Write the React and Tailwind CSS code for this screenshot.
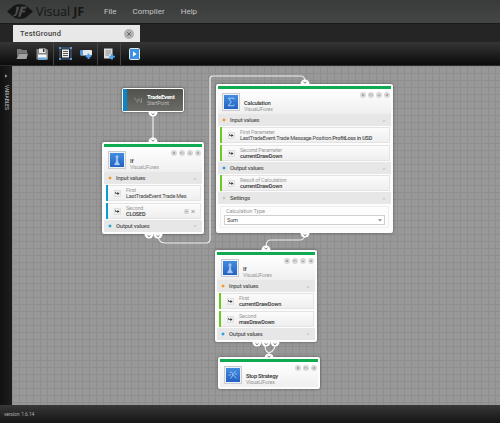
import React, { useState } from 'react';
import { X } from 'lucide-react';

const Logo = () => (
  <svg width="26" height="16" viewBox="0 0 26 16" className="shrink-0">
    <path d="M0 7.5 L7 1.5 Q13 -1 19 1.5 L26 7.5 L19 13.5 Q13 16 7 13.5 Z" fill="#161616" />
    <path d="M14 2.5 H20 L19 4.8 H16.3 L15.7 6.5 H18.5 L17.7 8.6 H15 L13.6 12.8 H11 Z" fill="#4b4c4c" />
    <path d="M9.5 2.8 H12.5 L10.2 10 Q9.4 12.8 6 12.4 L6.6 10.6 Q8 10.8 8.4 9.4 Z" fill="#4b4c4c" />
  </svg>
);

const OpenIcon = () => (
  <svg width="12" height="12" viewBox="0 0 12 12">
    <path d="M1 1 H5 L6 2 H11 V5 H3 L1 9 Z" fill="#777" />
    <path d="M3 5.5 H12 L10.5 11 H0.5 Z" fill="#a3a3a3" />
  </svg>
);

const SaveIcon = () => (
  <svg width="12" height="12" viewBox="0 0 12 12">
    <path d="M0.5 1 H11 L12 2 V11.5 H0.5 Z" fill="#858585" />
    <path d="M3 0.5 H9.5 V5 H3 Z" fill="#e8e8e8" />
    <path d="M7 1 H8.5 V4 H7 Z" fill="#333" />
    <path d="M2 6.5 H10.5 V11.5 H2 Z" fill="#f5f5f5" />
    <path d="M2 9.5 H10.5 V11.5 H2 Z" fill="#62a9ec" />
  </svg>
);

const SelectIcon = () => (
  <svg width="13" height="13" viewBox="0 0 13 13">
    <rect x="1" y="1" width="11" height="11" fill="none" stroke="#4e83b8" strokeWidth="0.8" />
    <rect x="3" y="2.5" width="7" height="8" fill="#eee" />
    <path d="M4 4.5 H9 M4 6.5 H9 M4 8.5 H9" stroke="#444" strokeWidth="0.9" />
    <path d="M0 0 H2 V2 H0 Z M11 0 H13 V2 H11 Z M0 11 H2 V13 H0 Z M11 11 H13 V13 H11 Z" fill="#5b9ad8" />
  </svg>
);

const AddNodeIcon = () => (
  <svg width="13" height="12" viewBox="0 0 13 12">
    <rect x="0.5" y="2" width="11.5" height="5.5" rx="1" fill="#e9e9e9" />
    <rect x="0.5" y="2" width="2.5" height="5.5" fill="#4d9ce8" />
    <path d="M8.5 5.5 V11 M5.8 8.2 H11.2" stroke="#4fa3f2" strokeWidth="2" />
  </svg>
);

const AddPageIcon = () => (
  <svg width="12" height="12" viewBox="0 0 12 12">
    <rect x="1" y="0.5" width="8.5" height="10" fill="#dcdcdc" />
    <path d="M2.5 3 H8 M2.5 5 H8 M2.5 7 H6" stroke="#777" strokeWidth="0.8" />
    <path d="M9 6 V11.5 M6.2 8.8 H11.8" stroke="#4fa3f2" strokeWidth="2" />
  </svg>
);

const PlayIcon = () => (
  <svg width="11" height="12" viewBox="0 0 11 12">
    <rect x="0.5" y="0.5" width="10" height="11" rx="1" fill="#3f92e0" stroke="#dcebf8" />
    <path d="M4 3.2 L7.5 6 L4 8.8 Z" fill="#fff" />
  </svg>
);

const glyphs = {
  if: <path d="M7 2 L8.5 4 L7.6 5 L8 9 L9.5 11 V12 H4.5 V11 L6 9 L6.4 5 L5.5 4 Z M5.5 5 H8.5" fill="#a8ccf4" stroke="#a8ccf4" strokeWidth="0.3" />,
  sum: <path d="M10 4.5 V3.2 H4.2 L7.3 7 L4.2 10.8 H10 V9.5" fill="none" stroke="#a8ccf4" strokeWidth="1" />,
  stop: <path d="M3.5 4 L6 4.5 L7 7 L4.5 10.5 M9.5 3 L7 6.5 L10.5 10.5 M9 6 H11 M2.5 7.5 L5 6.5" fill="none" stroke="#9cc6f5" strokeWidth="0.9" />,
};

const NodeIcon = ({ type }) => (
  <div className="w-[18px] h-[18px] p-px bg-[#eef1f5] border border-[#c9ccd0] shrink-0">
    <svg width="14" height="14" viewBox="0 0 14 14" className="bg-linear-to-b from-[#438ce0] to-[#2462c2]">
      {glyphs[type]}
    </svg>
  </div>
);

const marks = {
  stop: <path d="M2.2 2.2 H3.8 V3.8 H2.2 Z" fill="#888" />,
  link: <path d="M1.6 3.6 V2.6 H3.3 L4.5 3.8" fill="none" stroke="#999" strokeWidth="0.6" />,
  up: <path d="M1.7 3.7 L3 2.2 L4.3 3.7 Z" fill="#999" />,
  close: <path d="M2 2 L4 4 M4 2 L2 4" stroke="#999" strokeWidth="0.7" />,
};

const NodeTools = ({ items }) => (
  <div className="flex gap-[2px] pt-[2.5px] pr-[1.5px]">
    {items.map((item) => (
      <svg key={item} width="6" height="6" viewBox="0 0 6 6">
        <circle cx="3" cy="3" r="3" fill="#d8d8d8" />
        {marks[item]}
      </svg>
    ))}
  </div>
);

const ALL_TOOLS = ['stop', 'link', 'up', 'close'];

const NodeHeader = ({ type, title, tools = ALL_TOOLS }) => (
  <div className="flex h-[25px] pl-[4px] bg-linear-to-b from-white to-[#efefef]">
    <div className="pt-[4px]"><NodeIcon type={type} /></div>
    <div className="pt-[11px] pl-[4px] w-0 grow whitespace-nowrap">
      <div className="text-[5.8px] leading-[6px] tracking-[-0.25px] font-medium text-[#333]">{title}</div>
      <div className="text-[5.4px] leading-[6px] tracking-[-0.2px] text-[#999]">VisualJForex</div>
    </div>
    <NodeTools items={tools} />
  </div>
);

const Section = ({ label, dot, down }) => (
  <div className="flex items-center h-[12px] pl-[4px] pr-[5px] bg-[#e7e7e7] text-[5.8px] font-medium tracking-[-0.17px] text-[#555]">
    <svg width="4" height="4" viewBox="0 0 4 4" className="mr-[4px]">
      <path d="M2 0.2 L3.8 2 L2 3.8 L0.2 2 Z" fill={dot} />
    </svg>
    <span className="grow">{label}</span>
    <svg width="4" height="3" viewBox="0 0 4 3">
      <path d={down ? 'M0.5 0.5 H3.5 L2 2.3 Z' : 'M0.5 2.5 H3.5 L2 0.7 Z'} fill="#c0c0c0" />
    </svg>
  </div>
);

const bars = {
  green: 'bg-[#6ccb1c]',
  blue: 'bg-[#0a9ad4]',
};

const Param = ({ name, children, bar = 'green', editable, bold }) => (
  <div className="flex items-center h-[16px] ml-[1.5px] mr-[1px] bg-linear-to-b from-[#fbfbfb] to-[#efefef] border border-l-0 border-[#e4e4e4]">
    <div className={`w-[2.5px] h-[16px] shrink-0 ${bars[bar]}`}></div>
    <svg width="7" height="7" viewBox="0 0 7 7" className="ml-[6px] mr-[5px] shrink-0">
      <rect x="0.4" y="0.4" width="6.2" height="6.2" fill="#eee" stroke="#d0d0d0" strokeWidth="0.5" />
      <path d="M1.5 2 V3.5 H4" fill="none" stroke="#444" strokeWidth="0.8" />
      <path d="M3.4 2.1 L5.5 3.5 L3.4 4.9 Z" fill="#333" />
    </svg>
    <div className="grow whitespace-nowrap text-[5.5px] leading-[6px] tracking-[-0.2px]">
      <div className="text-[#999]">{name}</div>
      <div className={bold ? 'font-medium tracking-[-0.12px] text-[#333]' : 'text-[#444]'}>{children}</div>
    </div>
    {editable && (
      <svg width="12" height="5" viewBox="0 0 12 5" className="mr-[4px]">
        <path d="M0.5 1 H4.5 M0.5 2.5 H4.5 M0.5 4 H4.5" stroke="#aaa" strokeWidth="0.8" />
        <path d="M7.5 1 L10.5 4 M10.5 1 L7.5 4" stroke="#888" strokeWidth="0.8" />
      </svg>
    )}
  </div>
);

const Node = ({ place, children }) => (
  <div className={`absolute bg-[#fcfcfc] rounded-[2px] p-[2px] shadow-[0_0_3px_rgba(0,0,0,0.45)] ${place}`}>
    <div className="h-[3px] bg-[#10aa50]"></div>
    {children}
  </div>
);

const wires = [
  'M141 46 V76',
  'M146 170 Q147 177 153 177 H194 Q198 177 198 173 V13 Q198 10 201 10 H289 Q293 10 293 16',
  'M293 169 Q292 174 288 174 H258 Q254 174 254 182',
  'M254 277 Q251 284 257 287 M263 277 Q264 284 257 287',
];

const ports = [
  { x: 141, y: 46, flip: true },
  { x: 141, y: 76 },
  { x: 137, y: 168, flip: true },
  { x: 146, y: 168, flip: true },
  { x: 293, y: 18 },
  { x: 293, y: 167, flip: true },
  { x: 254, y: 184 },
  { x: 245, y: 276, flip: true },
  { x: 254, y: 276, flip: true },
  { x: 263, y: 276, flip: true },
  { x: 257, y: 292 },
];

const Connections = () => (
  <svg width="488" height="339" viewBox="0 0 488 339" className="absolute left-0 top-0">
    {wires.map((d) => (
      <path key={d} d={d} fill="none" stroke="#eee" strokeWidth="1.2" />
    ))}
    {ports.map(({ x, y, flip }) => (
      <g key={`${x}-${y}`}>
        <path d={flip ? `M${x - 4.5} ${y} A4.5 4.5 0 0 0 ${x + 4.5} ${y} Z` : `M${x - 4.5} ${y} A4.5 4.5 0 0 1 ${x + 4.5} ${y} Z`} fill="#fff" />
        <path
          d={flip ? `M${x - 1.5} ${y + 1.3} L${x} ${y + 2.7} L${x + 1.5} ${y + 1.3}` : `M${x - 1.5} ${y - 2.2} L${x} ${y - 0.8} L${x + 1.5} ${y - 2.2}`}
          fill="none"
          stroke="#666"
          strokeWidth="0.9"
        />
      </g>
    ))}
  </svg>
);

const Canvas = () => (
  <div className="relative grow overflow-hidden bg-[#989898] bg-[linear-gradient(to_right,#8e8e8e_1px,transparent_1px),linear-gradient(to_bottom,#8e8e8e_1px,transparent_1px)] bg-size-[7px_7px]">
    <div className="absolute left-[110px] top-[22px] w-[62px] h-[24px] flex items-center rounded-[2px] border-[1.5px] border-white bg-linear-to-b from-[#50514d] to-[#6b6c67] shadow-[0_0_3px_rgba(0,0,0,0.45)]">
      <div className="w-[4px] h-full bg-[#0787c5]"></div>
      <svg width="9" height="8" viewBox="0 0 9 8" className="ml-[7px] mr-[4px]">
        <path d="M0.5 1.5 L3.5 6.5 L4.5 2.5 L7.5 7 V2" fill="none" stroke="#8c8d8a" strokeWidth="0.9" />
      </svg>
      <div className="whitespace-nowrap">
        <div className="text-[6px] leading-[6px] tracking-[-0.3px] font-bold text-white">TradeEvent</div>
        <div className="text-[5.2px] leading-[6px] tracking-[-0.15px] text-[#bbb]">StartPoint</div>
      </div>
    </div>

    <Node place="left-[90px] top-[76px] w-[102px] h-[92px]">
      <NodeHeader type="if" title="If" />
      <Section label="Input values" dot="#f59a1b" />
      <div className="flex flex-col gap-[2px] py-px">
        <Param name="First" bar="blue">LastTradeEvent.Trade Mes</Param>
        <Param name="Second" bar="blue" editable bold>CLOSED</Param>
      </div>
      <Section label="Output values" dot="#2a9fd8" down />
    </Node>

    <Node place="left-[204px] top-[18px] w-[177px] h-[149px]">
      <NodeHeader type="sum" title="Calculation" />
      <Section label="Input values" dot="#f59a1b" />
      <div className="flex flex-col gap-[2px] py-px">
        <Param name="First Parameter">
          LastTradeEvent.Trade Message.Position.<span className="font-medium">ProfitLoss in USD</span>
        </Param>
        <Param name="Second Parameter" bold>currentDrawDown</Param>
      </div>
      <Section label="Output values" dot="#2a9fd8" />
      <div className="py-px">
        <Param name="Result of Calculation" bold>currentDrawDown</Param>
      </div>
      <Section label="Settings" dot="#c8c8c8" />
      <div className="m-[2px] px-[3px] h-[22px] border border-[#eee] text-[5.6px] tracking-[-0.15px] text-[#999]">
        <div className="leading-[8px] pl-[2px]">Calculation Type</div>
        <div className="flex items-center justify-between h-[10px] px-[2px] bg-white border border-[#d0d0d0] text-[#444]">
          <span>Sum</span>
          <svg width="4" height="3" viewBox="0 0 4 3">
            <path d="M0 0.3 H4 L2 2.6 Z" fill="#888" />
          </svg>
        </div>
      </div>
    </Node>

    <Node place="left-[203px] top-[184px] w-[102px] h-[92px]">
      <NodeHeader type="if" title="If" />
      <Section label="Input values" dot="#f59a1b" />
      <div className="flex flex-col gap-[2px] py-px">
        <Param name="First" bold>currentDrawDown</Param>
        <Param name="Second" bold>maxDrawDown</Param>
      </div>
      <Section label="Output values" dot="#2a9fd8" down />
    </Node>

    <Node place="left-[206px] top-[291px] w-[102px] h-[32px]">
      <NodeHeader type="stop" title="Stop Strategy" tools={['stop', 'link', 'close']} />
    </Node>

    <Connections />
  </div>
);

const App = () => {
  const [tab, setTab] = useState('TestGround');

  return (
    <div className="w-[500px] h-[423px] flex flex-col overflow-hidden bg-[#1a1a1a] font-[Roboto,sans-serif] select-none">
      <header className="flex items-center h-[23px] shrink-0 pl-[7px] bg-linear-to-b from-[#3a3c3b] to-[#444645] text-[8px] text-[#c4c4c4]">
        <Logo />
        <div className="ml-[3px] w-[65px] text-[12.5px] leading-[22px] text-[#151515] font-['Open_Sans',sans-serif] whitespace-nowrap tracking-[-0.05px]">
          Visual <span className="font-bold">JF</span>
        </div>
        <nav className="flex gap-[16px] ml-[3px]">
          <span>File</span>
          <span>Compiler</span>
          <span>Help</span>
        </nav>
      </header>

      <div className="h-[19px] shrink-0 pt-[1px] pl-[13px] bg-[#252525] border-t border-[#1b1b1b]">
        {tab && (
          <div className="flex items-center justify-between w-[127px] h-[17px] pl-[7px] pr-[6px] bg-[#e8e8e8] text-[7.5px] tracking-[0.2px] font-medium text-[#444]">
            <span>{tab}</span>
            <button onClick={() => setTab(null)} className="flex items-center justify-center size-[10px] rounded-full bg-[#b2b2b2] text-[#666]">
              <X size={6} strokeWidth={4} />
            </button>
          </div>
        )}
      </div>

      <div className="flex items-center h-[24px] shrink-0 bg-linear-to-b from-[#363636] to-[#0c0c0c] border-b border-[#2f2a2c]">
        <div className="flex items-center gap-[8px] w-[53px] pl-[16px]"><OpenIcon /><SaveIcon /></div>
        <div className="flex items-center gap-[8px] w-[44px] h-full pl-[5px] border-l border-[#444]"><SelectIcon /><AddNodeIcon /></div>
        <div className="flex items-center w-[23px] h-full pl-[5px] border-l border-[#444]"><AddPageIcon /></div>
        <div className="flex items-center h-full pl-[8px] border-l border-[#444]"><PlayIcon /></div>
      </div>

      <div className="flex grow">
        <aside className="flex flex-col items-center w-[12px] pt-[8px] bg-linear-to-r from-[#111] to-[#1e1e1e] text-[#aaa]">
          <svg width="4" height="4" viewBox="0 0 4 4"><path d="M1 0.3 L3.5 2 L1 3.7 Z" fill="#999" /></svg>
          <span className="mt-[7px] text-[4.8px] leading-[6px] font-medium [writing-mode:vertical-rl]">VARIABLES</span>
        </aside>
        <Canvas />
      </div>

      <footer className="h-[18px] shrink-0 pl-[4px] pt-[5px] bg-linear-to-b from-[#383838] to-[#151515] text-[5px] leading-[9px] tracking-[-0.15px] text-[#aaa]">
        version: 1.6.14
      </footer>
    </div>
  );
};

export default App;
